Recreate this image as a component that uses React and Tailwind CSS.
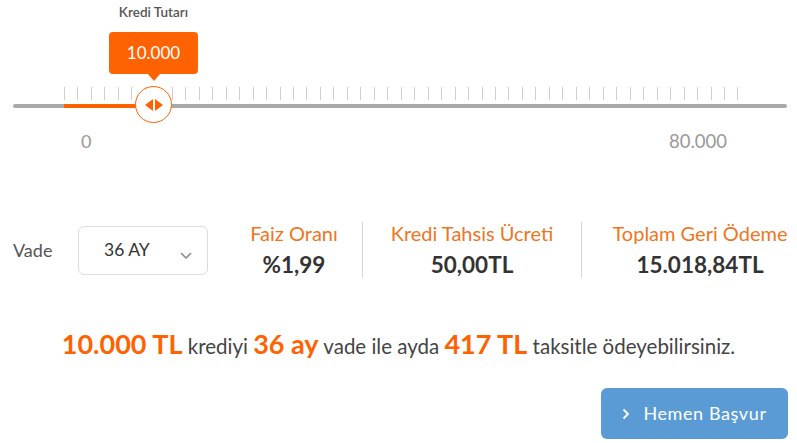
import React from 'react';

const TICKS = Array.from({ length: 51 });

function Slider() {
    return (
        <div className="relative h-[160px]">
            {/* label + tooltip follow the thumb */}
            <div className="absolute left-[109px] top-[6px] w-[89px] flex flex-col items-center">
                <span className="text-[13.5px] font-semibold text-[#555] leading-none whitespace-nowrap">Kredi Tutarı</span>
                <div className="relative mt-[12px] w-[89px] h-[42px] rounded-[4px] bg-[#ff6200] flex items-center justify-center">
                    <span className="text-white text-[17px] leading-none">10.000</span>
                    <span className="absolute left-1/2 -translate-x-1/2 top-[41px] w-0 h-0 border-l-[7px] border-r-[7px] border-t-[8px] border-l-transparent border-r-transparent border-t-[#ff6200]" />
                </div>
            </div>

            <div className="absolute top-[87px] left-[64px] w-[675px] h-[13px] flex justify-between">
                {TICKS.map((_, i) => (
                    <span key={i} className="w-px h-full bg-[#cfcfcf]" />
                ))}
            </div>

            <div className="absolute top-[104px] left-[13px] right-[10px] h-[4px] rounded-full bg-[#a9a9a9]" />
            <div className="absolute top-[104px] left-[64px] w-[80px] h-[4px] bg-[#ff6200]" />

            <div className="absolute top-[86px] left-[135px] w-[37px] h-[37px] rounded-full bg-white border-[1.5px] border-[#ff6200] flex items-center justify-center gap-[2px]">
                <span className="w-0 h-0 border-t-[6px] border-b-[6px] border-r-[8px] border-t-transparent border-b-transparent border-r-[#ff6200]" />
                <span className="w-0 h-0 border-t-[6px] border-b-[6px] border-l-[8px] border-t-transparent border-b-transparent border-l-[#ff6200]" />
            </div>

            <span className="absolute top-[128px] left-[81px] text-[18px] text-[#999]">0</span>
            <span className="absolute top-[128px] left-[669px] text-[18.5px] text-[#999]">80.000</span>
        </div>
    );
}

function Stat({ label, value, width, last }) {
    return (
        <div className={`flex flex-col items-center shrink-0 ${width} ${last ? '' : 'border-r border-[#d6d6d6]'} h-[56px] justify-center`}>
            <span className="text-[20px] text-[#ef7522] leading-none whitespace-nowrap">{label}</span>
            <span className="mt-[11px] text-[22.5px] font-bold text-[#333] leading-none whitespace-nowrap">{value}</span>
        </div>
    );
}

export default function App() {
    return (
        <div className="w-[797px] h-[443px] overflow-hidden bg-white" style={{ fontFamily: 'Lato, "Noto Sans", sans-serif' }}>
            <Slider />

            <div className="flex items-center mt-[62px]">
                <span className="ml-[13px] w-[65px] shrink-0 text-[18px] text-[#555]">Vade</span>
                <div className="w-[130px] h-[49px] shrink-0 rounded-[6px] border border-[#dcdcdc] flex items-center pl-[25px] pr-[15px]">
                    <span className="flex-1 text-[17.5px] text-[#333]">36 AY</span>
                    <svg width="12" height="7" viewBox="0 0 12 7" className="mt-[10px]">
                        <path d="M1 1l5 5 5-5" fill="none" stroke="#888" strokeWidth="1.5" />
                    </svg>
                </div>
                <div className="ml-[18px] flex shrink-0">
                    <Stat label="Faiz Oranı" value="%1,99" width="w-[137px]" />
                    <Stat label="Kredi Tahsis Ücreti" value="50,00TL" width="w-[219px]" />
                    <Stat label="Toplam Geri Ödeme" value="15.018,84TL" width="w-[236px]" last />
                </div>
            </div>

            <p className="mt-[52px] text-center text-[20.5px] text-[#444] leading-none whitespace-nowrap">
                <span className="text-[27px] font-bold text-[#ff6200]">10.000 TL</span> krediyi{' '}
                <span className="text-[27px] font-bold text-[#ff6200]">36 ay</span> vade ile ayda{' '}
                <span className="text-[27px] font-bold text-[#ff6200]">417 TL</span> taksitle ödeyebilirsiniz.
            </p>

            <div className="flex justify-end mt-[31px] pr-[9px]">
                <button className="w-[187px] h-[51px] rounded-[6px] bg-[#5b9bd5] text-white flex items-center justify-center gap-[13px] text-[18px] tracking-[0.6px]">
                    <svg width="8" height="12" viewBox="0 0 8 12">
                        <path d="M1.5 1.5l4.5 4.5-4.5 4.5" fill="none" stroke="white" strokeWidth="1.8" />
                    </svg>
                    Hemen Başvur
                </button>
            </div>
        </div>
    );
}
